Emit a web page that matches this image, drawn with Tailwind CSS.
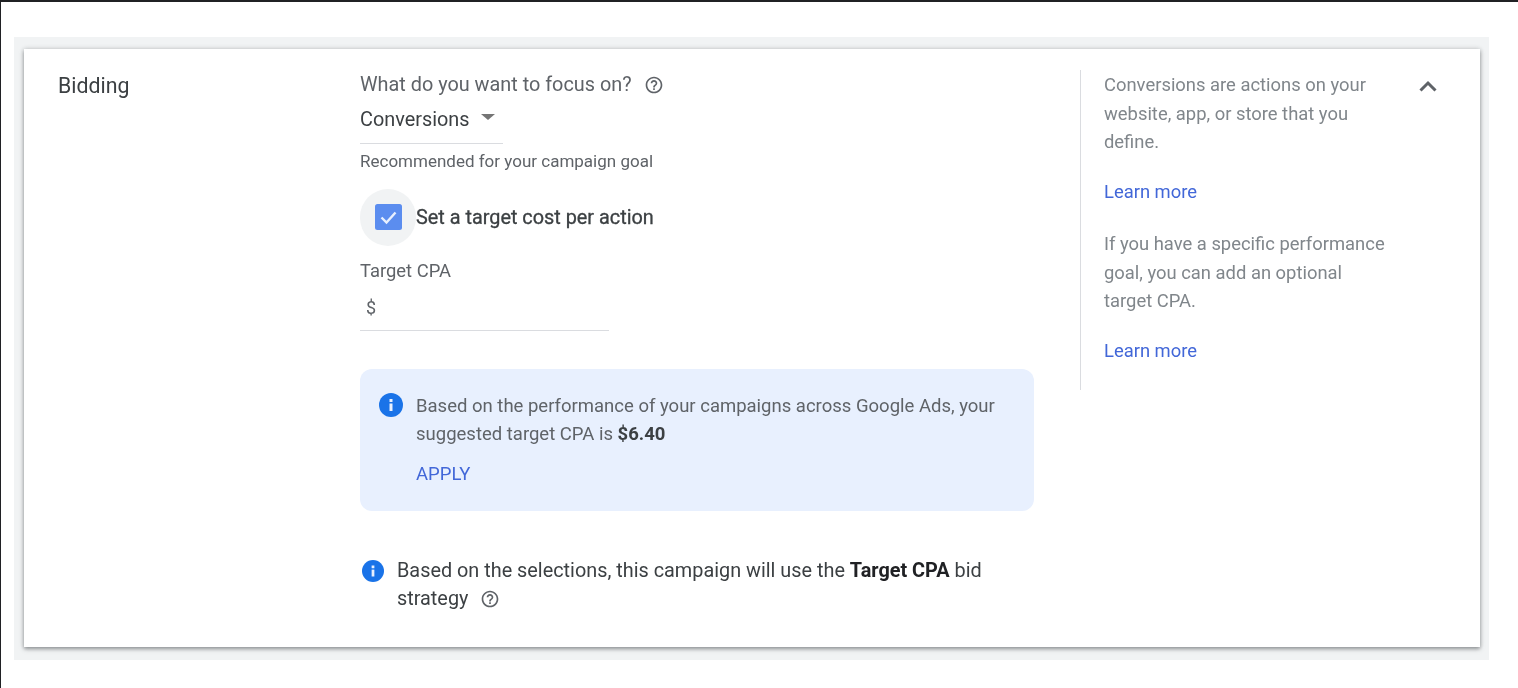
<!DOCTYPE html>
<html><head><meta charset="utf-8"><script src="https://cdn.jsdelivr.net/npm/@tailwindcss/browser@4"></script></head>
<body class="bg-white">
<div class="w-[1518px] h-[688px] overflow-hidden bg-white border-t-2 border-l border-[#202124] pt-[35px] pl-[13px] font-['Roboto',sans-serif]">
  <div class="w-[1475px] h-[623px] bg-[#f1f3f4] pt-[12px] pl-[10px]">
    <div class="w-[1456px] h-[598px] bg-white shadow-[0_2px_4px_rgba(60,64,67,0.5),0_0_5px_rgba(60,64,67,0.2)] flex relative blur-[0.4px]">
      <div class="w-[336px] pl-[34px] pt-[23px] text-[21.3px] leading-[28px] text-[#3c4043]">Bidding</div>
      <div class="w-[720px] pt-[22px] text-[19.85px] leading-[28px]">
        <div class="flex items-center text-[#5f6368] h-[28px]">What do you want to focus on?
          <svg class="ml-[12px]" width="20" height="20" viewBox="0 0 24 24" fill="#5f6368"><path d="M11 18h2v-2h-2v2zm1-16C6.48 2 2 6.48 2 12s4.48 10 10 10 10-4.48 10-10S17.52 2 12 2zm0 18c-4.41 0-8-3.59-8-8s3.59-8 8-8 8 3.59 8 8-3.59 8-8 8zm0-14c-2.21 0-4 1.79-4 4h2c0-1.1.9-2 2-2s2 .9 2 2c0 2-3 1.75-3 5h2c0-2.25 3-2.5 3-5 0-2.21-1.79-4-4-4z"/></svg>
        </div>
        <div class="w-[143px] h-[38px] mt-[7px] border-b border-[#dadce0] flex items-start text-[#3c4043]">
          <span class="leading-[28px]">Conversions</span>
          <span class="ml-[11px] mt-[8px] w-0 h-0 border-x-[7px] border-x-transparent border-t-[6px] border-t-[#757575]"></span>
        </div>
        <div class="mt-[3px] text-[17px] leading-[28px] text-[#5f6368]">Recommended for your campaign goal</div>
        <div class="flex items-center mt-[13px] h-[58px]">
          <div class="w-[56px] h-[57px] rounded-full bg-[#f1f3f4] flex items-center justify-center">
            <svg width="27" height="26" viewBox="0 0 27 26"><rect width="27" height="26" rx="2.5" fill="#5b8def"/><path d="M6.5 13.5l5 5 9-10" fill="none" stroke="#e8f0fe" stroke-width="2.4"/></svg>
          </div>
          <span class="pt-[2px] text-[#3c4043] [-webkit-text-stroke:0.3px_#3c4043]">Set a target cost per action</span>
        </div>
        <div class="mt-[11px] text-[#5f6368] text-[18.4px] leading-[28px]">Target CPA</div>
        <div class="w-[249px] h-[36px] mt-[10px] pl-[6px] border-b border-[#dadce0] text-[#5f6368] leading-[26px] text-[18px]">$</div>
        <div class="w-[674px] h-[142px] mt-[38px] rounded-[12px] bg-[#e8f0fe] flex pl-[19px] pt-[23px] text-[18.5px]">
          <svg class="mt-[1px] shrink-0" width="24" height="24" viewBox="0 0 24 24"><circle cx="12" cy="12" r="12" fill="#1a73e8"/><rect x="10.5" y="10.5" width="3" height="7.5" fill="#e8f0fe"/><rect x="10.5" y="6" width="3" height="3" fill="#e8f0fe"/></svg>
          <div class="ml-[13px] text-[#5f6368]">
            <div>Based on the performance of your campaigns across Google Ads, your</div>
            <div>suggested target CPA is <b class="font-bold text-[#3c4043]">$6.40</b></div>
            <div class="mt-[12px] text-[#4267d8]">APPLY</div>
          </div>
        </div>
        <div class="flex mt-[46px] ml-[2px] text-[#3c4043]">
          <svg class="mt-[3px] shrink-0" width="22" height="22" viewBox="0 0 24 24"><circle cx="12" cy="12" r="12" fill="#1a73e8"/><rect x="10.5" y="10.5" width="3" height="7.5" fill="#e8f0fe"/><rect x="10.5" y="6" width="3" height="3" fill="#e8f0fe"/></svg>
          <div class="ml-[13px] w-[650px]">Based on the selections, this campaign will use the <b class="font-bold text-[#202124]">Target CPA</b> bid<br><span class="inline-flex items-center">strategy
            <svg class="ml-[12px]" width="20" height="20" viewBox="0 0 24 24" fill="#5f6368"><path d="M11 18h2v-2h-2v2zm1-16C6.48 2 2 6.48 2 12s4.48 10 10 10 10-4.48 10-10S17.52 2 12 2zm0 18c-4.41 0-8-3.59-8-8s3.59-8 8-8 8 3.59 8 8-3.59 8-8 8zm0-14c-2.21 0-4 1.79-4 4h2c0-1.1.9-2 2-2s2 .9 2 2c0 2-3 1.75-3 5h2c0-2.25 3-2.5 3-5 0-2.21-1.79-4-4-4z"/></svg></span></div>
        </div>
      </div>
      <div class="mt-[21px] h-[320px] w-[330px] border-l border-[#dadce0] pl-[23px] pt-[1px] text-[18.4px] leading-[28.5px] text-[#80868b]">
        <div>Conversions are actions on your<br>website, app, or store that you<br>define.</div>
        <div class="mt-[21px] text-[#4267d8]">Learn more</div>
        <div class="mt-[24px]">If you have a specific performance<br>goal, you can add an optional<br>target CPA.</div>
        <div class="mt-[21px] text-[#4267d8]">Learn more</div>
      </div>
      <svg class="absolute left-[1395px] top-[31px]" width="18" height="12" viewBox="0 0 18 12"><path d="M1.5 10.5L9 3l7.5 7.5" fill="none" stroke="#5f6368" stroke-width="3"/></svg>
    </div>
  </div>
</div>
</body></html>
